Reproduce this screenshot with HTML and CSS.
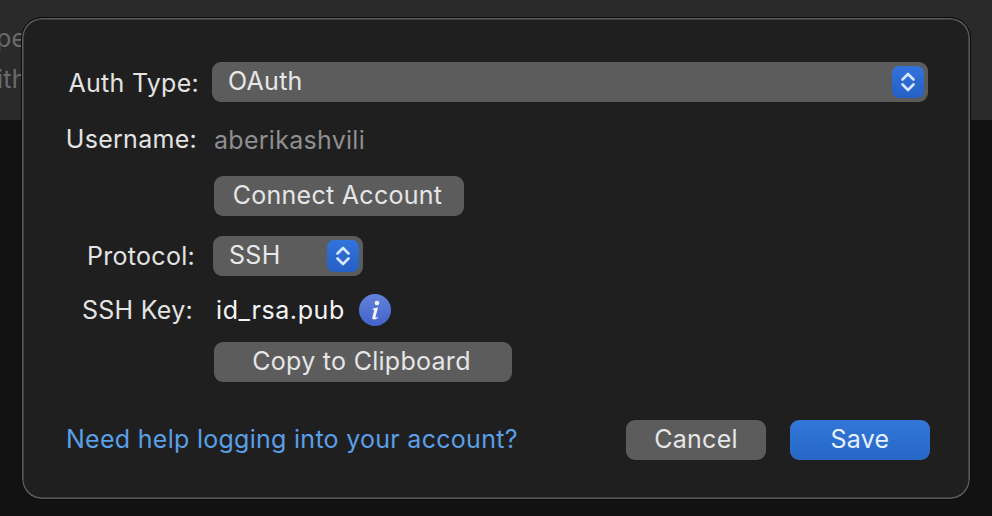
FILE: index.html
```html
<!DOCTYPE html>
<html lang="en">
<head>
<meta charset="utf-8">
<title>Account settings</title>
<link rel="stylesheet" href="styles.css">
</head>
<body>
<div class="backdrop">
  <div class="backdrop-top">
    <span class="ghost ghost-one">pe</span>
    <span class="ghost ghost-two">ith</span>
  </div>
</div>
<div class="dialog">
  <div class="row">
    <span class="label label-auth">Auth Type:</span>
    <div class="select select-wide">
      <span class="select-text">OAuth</span>
      <span class="stepper"><svg viewBox="0 0 18 24" width="18" height="24"><path d="M3.500 9.500 9 4l5.500 5.500M3.500 14.500 9 20l5.500-5.500" fill="none" stroke="#d9e6ff" stroke-width="2.600" stroke-linecap="round" stroke-linejoin="round"/></svg></span>
    </div>
  </div>
  <div class="row row-user">
    <span class="label label-user">Username:</span>
    <span class="value-muted">aberikashvili</span>
  </div>
  <div class="row row-connect">
    <button class="btn btn-connect">Connect Account</button>
  </div>
  <div class="row row-protocol">
    <span class="label label-protocol">Protocol:</span>
    <div class="select select-small">
      <span class="select-text">SSH</span>
      <span class="stepper"><svg viewBox="0 0 18 24" width="18" height="24"><path d="M3.500 9.500 9 4l5.500 5.500M3.500 14.500 9 20l5.500-5.500" fill="none" stroke="#d9e6ff" stroke-width="2.600" stroke-linecap="round" stroke-linejoin="round"/></svg></span>
    </div>
  </div>
  <div class="row row-key">
    <span class="label label-key">SSH Key:</span>
    <span class="value">id_rsa.pub</span>
    <span class="info"><svg viewBox="0 0 32 32" width="32" height="32"><circle cx="18" cy="9" r="2.300" fill="#f4f7ff"/><path d="M14 14.500l5-1-2.500 9.500c-.2.800.4 1 1 .6l1.200-.9.4.6c-1.200 1.400-2.400 2.200-4 2.200-1.500 0-2-1-1.700-2.300l1.900-7.400-1.700.2z" fill="#f4f7ff"/></svg></span>
  </div>
  <div class="row row-copy">
    <button class="btn btn-copy">Copy to Clipboard</button>
  </div>
  <div class="footer">
    <a class="help">Need help logging into your account?</a>
    <div class="actions">
      <button class="btn btn-action">Cancel</button>
      <button class="btn btn-action btn-primary">Save</button>
    </div>
  </div>
</div>
</body>
</html>
```

FILE: styles.css
```css
* { box-sizing: border-box; }
html, body { margin: 0; padding: 0; height: 100%; }
body {
  width: 992px;
  height: 516px;
  overflow: hidden;
  position: relative;
  background: #121212;
  font-family: Inter, "Liberation Sans", sans-serif;
  font-size: 25px;
  letter-spacing: 0.28px;
}
.backdrop-top {
  height: 120px;
  background: #2a2a2a;
  color: #6b6b6b;
  display: flex;
  flex-direction: column;
  align-items: flex-start;
  padding-top: 24px;
  gap: 12px;
  overflow: hidden;
}
.ghost { display: block; line-height: 29px; }
.ghost-one { margin-left: -4px; }
.ghost-two { margin-left: -3px; }
.dialog {
  position: absolute;
  left: 21px;
  top: 17px;
  width: 950px;
  height: 483px;
  background: #1f1f1f;
  border: 1px solid #0a0a0a;
  border-radius: 21px;
  box-shadow: inset 0 0 0 1.500px #5c5c5c;
  padding: 44px 0 0 0;
  color: #e3e3e3;
}
.row { display: flex; align-items: center; height: 40px; }
.label { text-align: right; flex: none; line-height: 40px; }
.label-auth { width: 177px; margin-top: 1px; }
.label-user { width: 175px; margin-top: -2px; }
.label-protocol { width: 173px; margin-top: -1px; }
.label-key { width: 171px; margin-top: -1px; }
.select {
  display: flex;
  align-items: center;
  justify-content: space-between;
  height: 40px;
  background: #5c5c5c;
  border-radius: 9px;
  color: #e8e8e8;
  padding: 0 4px 0 16px;
  flex: none;
}
.select-text { margin-top: -2px; }
.select-wide { width: 716px; margin-left: 13px; }
.select-small { width: 150px; margin-left: 18px; }
.stepper {
  width: 32px;
  height: 32px;
  border-radius: 7px;
  background: linear-gradient(#3273dc, #2560c4);
  display: flex;
  align-items: center;
  justify-content: center;
}
.row-user { margin-top: 18px; }
.value-muted { margin-left: 17px; color: #8f8f8f; }
.btn {
  font: inherit;
  letter-spacing: inherit;
  height: 40px;
  border: 0;
  border-radius: 9px;
  background: #5c5c5c;
  color: #e6e6e6;
  padding: 0 0 2px;
  flex: none;
}
.row-connect { margin-top: 16px; padding-left: 192px; }
.btn-connect { width: 250px; padding-right: 3px; }
.row-protocol { margin-top: 20px; }
.row-key { margin-top: 14px; }
.value { margin-left: 23px; color: #f5f5f5; letter-spacing: 0.6px; }
.info {
  width: 32px;
  height: 32px;
  margin-left: 14px;
  border-radius: 50%;
  background: linear-gradient(#6382dc, #4263c9);
  flex: none;
}
.row-copy { margin-top: 12px; padding-left: 192px; }
.btn-copy { width: 298px; padding-right: 3px; }
.footer {
  margin-top: 38px;
  padding-left: 44px;
  display: flex;
  align-items: center;
  justify-content: space-between;
  width: 908px;
  height: 40px;
}
.help { color: #5a9fe8; margin-top: -2px; }
.actions { display: flex; gap: 24px; }
.btn-action { width: 140px; }
.btn-primary { background: linear-gradient(#3277d8, #2767c6); color: #e6f0ff; }
```
